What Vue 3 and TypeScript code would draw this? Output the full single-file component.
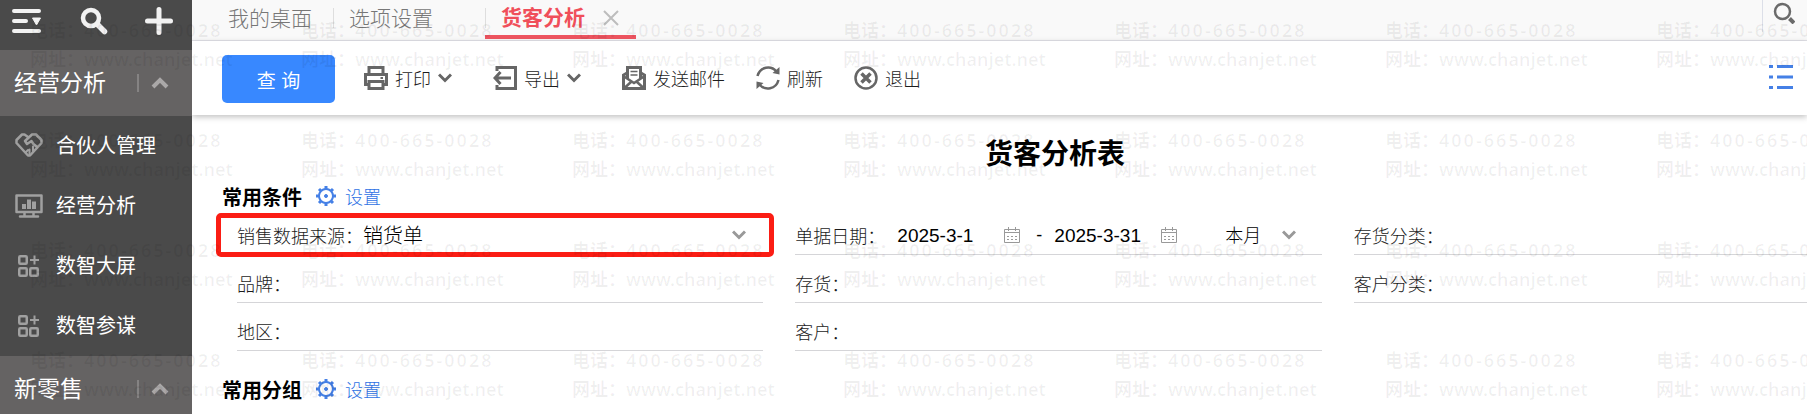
<script setup lang="ts">
import { ref } from 'vue'

interface MenuItem {
  label: string
  icon: 'partner' | 'chart' | 'grid'
}

const menuItems: MenuItem[] = [
  { label: '合伙人管理', icon: 'partner' },
  { label: '经营分析', icon: 'chart' },
  { label: '数智大屏', icon: 'grid' },
  { label: '数智参谋', icon: 'grid' },
]

const source = ref('销货单')
const startDate = ref('2025-3-1')
const endDate = ref('2025-3-31')
const period = ref('本月')
const brand = ref('')
const stock = ref('')
const region = ref('')
const customer = ref('')
const stockClass = ref('')
const customerClass = ref('')
</script>

<template>
  <div class="app">
    <aside class="sidebar">
      <div class="side-tools">
        <button type="button" aria-label="折叠菜单">
          <svg width="30" height="26" viewBox="0 0 30 26">
            <g stroke="#f2f2f2" stroke-width="4" stroke-linecap="round">
              <path d="M2 3H27M2 13H14M2 23H27" />
            </g>
            <path d="M20.500 10h8l-4 7z" fill="#f2f2f2" stroke="#f2f2f2" stroke-linejoin="round" />
          </svg>
        </button>
        <button type="button" aria-label="搜索菜单">
          <svg width="28" height="28" viewBox="0 0 28 28" fill="none" stroke="#f2f2f2" stroke-linecap="round">
            <circle cx="11" cy="11" r="8" stroke-width="4.500" />
            <path d="M18 18L24.500 24.500" stroke-width="5.500" />
          </svg>
        </button>
        <button type="button" aria-label="新增">
          <svg width="28" height="28" viewBox="0 0 28 28">
            <path d="M14 2.500V25.500M2.500 14H25.500" stroke="#f2f2f2" stroke-width="5" stroke-linecap="round" />
          </svg>
        </button>
      </div>

      <button type="button" class="group">
        <span class="group-name">经营分析</span>
        <span class="bar"></span>
        <svg width="18" height="12" viewBox="0 0 18 12" fill="none" stroke="#aaa8a8" stroke-width="4">
          <path d="M2 10L9 3L16 10" />
        </svg>
      </button>

      <nav>
        <a v-for="item in menuItems" :key="item.label" href="#" class="item">
          <svg v-if="item.icon === 'partner'" width="28" height="28" viewBox="0 0 28 28" fill="none" stroke="#a0a0a0" stroke-width="2.500" stroke-linejoin="round" stroke-linecap="round">
            <path d="M13 5L9.500 2.500H7L1.500 8V11L13 23.500H15L26.500 11V8L21 2.500H17L10 9L12 12L16.500 9L18.500 12L22 15" />
            <path d="M11 20L13 18M14.500 22.500V17.500M18 19V14.500" stroke-width="2" />
          </svg>
          <svg v-else-if="item.icon === 'chart'" width="28" height="24" viewBox="0 0 28 24">
            <path d="M1.500 1.500H26.500V18H1.500ZM9.500 18V22M18.500 18V22M5 22.500H23" fill="none" stroke="#a0a0a0" stroke-width="2.500" stroke-linejoin="round" stroke-linecap="round" />
            <path d="M9 15V10M14 15V5.500M19 15V7.500" stroke="#a0a0a0" stroke-width="4" />
          </svg>
          <svg v-else width="28" height="24" viewBox="0 0 28 24" fill="none" stroke="#a0a0a0" stroke-width="2.500">
            <rect x="4.250" y="2.250" width="7.500" height="7.500" rx="1" />
            <rect x="4.250" y="14.250" width="7.500" height="7.500" rx="1" />
            <rect x="15.250" y="14.250" width="7.500" height="7.500" rx="1" />
            <path d="M19.500 1.500V10.500M15 6H24" stroke-width="2" />
          </svg>
          <span>{{ item.label }}</span>
        </a>
      </nav>

      <button type="button" class="group">
        <span class="group-name">新零售</span>
        <span class="bar"></span>
        <svg width="18" height="12" viewBox="0 0 18 12" fill="none" stroke="#aaa8a8" stroke-width="4">
          <path d="M2 10L9 3L16 10" />
        </svg>
      </button>
    </aside>

    <main class="main">
      <header class="tabs">
        <a href="#" class="tab home">我的桌面</a>
        <a href="#" class="tab options">选项设置</a>
        <div class="tab active">
          <a href="#">货客分析</a>
          <button type="button" aria-label="关闭标签">
            <svg width="16" height="16" viewBox="0 0 16 16" stroke="#bdbdbd" stroke-width="2">
              <path d="M1 1L15 15M15 1L1 15" />
            </svg>
          </button>
        </div>
        <button type="button" class="tab-search" aria-label="搜索">
          <svg width="22" height="22" viewBox="0 0 22 22" fill="none" stroke="#6b6b6b">
            <circle cx="9.500" cy="9.500" r="7.500" stroke-width="2.500" />
            <path d="M16.500 16.500L21 21" stroke-width="4" />
          </svg>
        </button>
      </header>

      <div class="toolbar">
        <button type="button" class="query">查 询</button>
        <button type="button" class="tool print">
          <svg width="24" height="24" viewBox="0 0 24 24" fill="none" stroke="#666" stroke-width="3">
            <path d="M5 8V1.500H19V8M5 18.500H1.500V8.500H22.500V18.500H19" />
            <path d="M5 15.500H19V22.500H5Z" />
            <path d="M16.500 12H19" stroke-width="2" />
          </svg>
          <span>打印</span>
          <svg width="14" height="10" viewBox="0 0 14 10" fill="none" stroke="#666" stroke-width="3">
            <path d="M1 1.500L7 7.500L13 1.500" />
          </svg>
        </button>
        <button type="button" class="tool export">
          <svg width="24" height="24" viewBox="0 0 24 24" fill="none" stroke="#666" stroke-width="3">
            <path d="M4 5V1.500H22.500V22.500H4V19" />
            <path d="M18 12H2M7.500 6L2 12L7.500 18" />
          </svg>
          <span>导出</span>
          <svg width="14" height="10" viewBox="0 0 14 10" fill="none" stroke="#666" stroke-width="3">
            <path d="M1 1.500L7 7.500L13 1.500" />
          </svg>
        </button>
        <button type="button" class="tool mail">
          <svg width="24" height="24" viewBox="0 0 24 24" fill="none" stroke="#666" stroke-width="3">
            <path d="M5.500 13V1.500H18.500V13" />
            <path d="M5 7L1.500 9V22.500H22.500V9L19 7" />
            <path d="M2 10.500L12 17L22 10.500M2.500 22L9.500 15.500M21.500 22L14.500 15.500" stroke-width="2.500" />
            <path d="M8.500 5.500H15.500M8.500 9H15.500" stroke-width="1.500" />
          </svg>
          <span>发送邮件</span>
        </button>
        <button type="button" class="tool refresh">
          <svg width="24" height="24" viewBox="0 0 24 24" fill="none" stroke="#666" stroke-width="2.500">
            <path d="M1.500 10C4 0.500 15 -1 20.500 5.500M22.500 14C20 23.500 9 25 3.500 18.500" />
            <path d="M23.500 1V8.500L16.500 7ZM0.500 23V15.500L7.500 17Z" fill="#666" stroke="none" />
          </svg>
          <span>刷新</span>
        </button>
        <button type="button" class="tool exit">
          <svg width="24" height="24" viewBox="0 0 24 24" fill="none" stroke="#666">
            <circle cx="12" cy="12" r="10.500" stroke-width="2.500" />
            <path d="M7.500 7.500L16.500 16.500M16.500 7.500L7.500 16.500" stroke-width="3.500" />
          </svg>
          <span>退出</span>
        </button>
        <button type="button" class="list-toggle" aria-label="列表">
          <svg width="26" height="26" viewBox="0 0 26 26" stroke="#4580e6" stroke-width="3">
            <path d="M1 2.500H5M9 2.500H25M1 13H5M9 13H25M1 23.500H5M9 23.500H25" />
          </svg>
        </button>
      </div>

      <div class="report">
        <h1>货客分析表</h1>

        <div class="section">
          <h2>常用条件</h2>
          <a href="#">
            <svg width="22" height="22" viewBox="0 0 22 22" fill="none" stroke="#4580e6">
              <circle cx="11" cy="11" r="7" stroke-width="2" />
              <circle cx="11" cy="11" r="1.500" fill="#4580e6" />
              <path d="M11 1V4M11 18V21M1 11H4M18 11H21M4 4L6 6M16 16L18 18M4 18L6 16M16 6L18 4" stroke-width="3" />
            </svg>
            设置
          </a>
        </div>

        <form class="filters" @submit.prevent>
          <div class="field marked">
            <label for="source">销售数据来源：</label>
            <select id="source" v-model="source" class="big">
              <option>销货单</option>
            </select>
            <svg class="chev" width="14" height="10" viewBox="0 0 14 10" fill="none" stroke="#999" stroke-width="3">
              <path d="M1 1.500L7 7.500L13 1.500" />
            </svg>
          </div>
          <div class="field dates">
            <label for="start">单据日期：</label>
            <input id="start" v-model="startDate" type="text" class="date start" />
            <button type="button" aria-label="选择开始日期">
              <svg width="16" height="16" viewBox="0 0 16 16" fill="none" stroke="#999">
                <path d="M0.500 2.500H15.500V15.500H0.500ZM0.500 5.500H15.500M4.500 0V4M11.500 0V4" />
                <path d="M3 9.500H13M3 12.500H13" stroke-dasharray="2 2" />
              </svg>
            </button>
            <span class="dash">-</span>
            <input v-model="endDate" type="text" class="date end" aria-label="结束日期" />
            <button type="button" aria-label="选择结束日期">
              <svg width="16" height="16" viewBox="0 0 16 16" fill="none" stroke="#999">
                <path d="M0.500 2.500H15.500V15.500H0.500ZM0.500 5.500H15.500M4.500 0V4M11.500 0V4" />
                <path d="M3 9.500H13M3 12.500H13" stroke-dasharray="2 2" />
              </svg>
            </button>
            <select v-model="period" class="period" aria-label="日期区间">
              <option>本月</option>
            </select>
            <svg class="chev" width="14" height="10" viewBox="0 0 14 10" fill="none" stroke="#999" stroke-width="3">
              <path d="M1 1.500L7 7.500L13 1.500" />
            </svg>
          </div>
          <div class="field">
            <label for="stock-class">存货分类：</label>
            <input id="stock-class" v-model="stockClass" type="text" />
          </div>
          <div class="field">
            <label for="brand">品牌：</label>
            <input id="brand" v-model="brand" type="text" />
          </div>
          <div class="field">
            <label for="stock">存货：</label>
            <input id="stock" v-model="stock" type="text" />
          </div>
          <div class="field">
            <label for="customer-class">客户分类：</label>
            <input id="customer-class" v-model="customerClass" type="text" />
          </div>
          <div class="field">
            <label for="region">地区：</label>
            <input id="region" v-model="region" type="text" />
          </div>
          <div class="field">
            <label for="customer">客户：</label>
            <input id="customer" v-model="customer" type="text" />
          </div>
        </form>

        <div class="section">
          <h2>常用分组</h2>
          <a href="#">
            <svg width="22" height="22" viewBox="0 0 22 22" fill="none" stroke="#4580e6">
              <circle cx="11" cy="11" r="7" stroke-width="2" />
              <circle cx="11" cy="11" r="1.500" fill="#4580e6" />
              <path d="M11 1V4M11 18V21M1 11H4M18 11H21M4 4L6 6M16 16L18 18M4 18L6 16M16 6L18 4" stroke-width="3" />
            </svg>
            设置
          </a>
        </div>
      </div>
    </main>

    <div class="watermark" aria-hidden="true">
      <div v-for="n in 28" :key="n" class="mark">
        <div>电话：<span class="phone">400-665-0028</span></div>
        <div>网址：<span class="site">www.chanjet.net</span></div>
      </div>
    </div>
  </div>
</template>

<style>
body {
  margin: 0;
}
</style>

<style scoped>
.app {
  position: relative;
  display: flex;
  height: 100vh;
  overflow: hidden;
  background: #fff;
  color: #1c1c1c;
  font-family: "Liberation Sans", "Noto Sans CJK SC", sans-serif;
  font-size: 18px;
  font-weight: 300;
}
button,
input,
select {
  margin: 0;
  padding: 0;
  border: 0;
  background: none;
  color: inherit;
  font: inherit;
  appearance: none;
  outline: none;
}
a {
  color: inherit;
  text-decoration: none;
}
svg {
  display: block;
  flex: none;
}

.sidebar {
  flex: none;
  width: 192px;
  background: #4a4a4a;
  color: #fff;
}
.side-tools {
  display: flex;
  align-items: center;
  justify-content: space-between;
  box-sizing: border-box;
  height: 50px;
  padding: 0 19px 8px 12px;
}
.group {
  display: flex;
  align-items: center;
  box-sizing: border-box;
  width: 100%;
  height: 66px;
  padding: 0 23px 0 14px;
  background: #656363;
}
.group-name {
  flex: 1;
  padding-bottom: 4px;
  font-size: 23px;
  font-weight: 400;
  text-align: left;
}
.bar {
  width: 2px;
  height: 18px;
  margin-right: 12px;
  background: #858383;
}
.item {
  display: flex;
  align-items: center;
  gap: 13px;
  height: 60px;
  padding-left: 15px;
  font-size: 20px;
  font-weight: 400;
}
.item span {
  padding-bottom: 4px;
}

.main {
  flex: 1;
  min-width: 0;
  overflow: hidden;
}
.tabs {
  display: flex;
  height: 40px;
  padding-left: 22px;
  border-bottom: 1px solid #e2e2e8;
  background: #f9f9f9;
  color: #777;
  font-size: 21px;
  line-height: 38px;
}
.tab {
  position: relative;
  padding: 0 16px;
}
.home {
  padding: 0 21px 0 14px;
}
.options {
  padding-right: 52px;
}
.options::before,
.active::before {
  content: "";
  position: absolute;
  top: 8px;
  left: 0;
  width: 1px;
  height: 20px;
  background: #dedede;
}
.active {
  display: flex;
  align-items: center;
  gap: 18px;
  box-sizing: border-box;
  height: 39px;
  padding-right: 17px;
  border-bottom: 4px solid #ee5560;
  color: #f04f5a;
  font-weight: 700;
}
.tab-search {
  width: 45px;
  height: 32px;
  margin-left: auto;
  padding: 0 0 6px 10px;
  border-left: 1px solid #dcdfe8;
}
.toolbar {
  position: relative;
  display: flex;
  align-items: center;
  box-sizing: border-box;
  height: 74px;
  padding: 2px 13px 0 30px;
  background: #fff;
  box-shadow: 0 2px 6px rgba(0, 0, 0, 0.25);
}
.query {
  width: 113px;
  height: 48px;
  margin-right: 29px;
  border-radius: 5px;
  background: #3888ff;
  color: #fff;
  font-size: 19px;
  font-weight: 400;
}
.tool {
  display: flex;
  align-items: center;
  gap: 7px;
  padding-bottom: 2px;
}
.print,
.export {
  margin-right: 41px;
}
.mail,
.refresh {
  margin-right: 31px;
}
.list-toggle {
  margin-left: auto;
  padding-bottom: 4px;
}

.report {
  box-sizing: border-box;
  width: 107%;
  padding: 19px 32px 0 30px;
}
h1 {
  margin: 0;
  color: #000;
  font-size: 28px;
  font-weight: 700;
  line-height: 42px;
  text-align: center;
}
.section {
  display: flex;
  align-items: center;
  gap: 13px;
  height: 40px;
}
h2 {
  margin: 0;
  color: #000;
  font-size: 20px;
  font-weight: 700;
}
.section a {
  display: flex;
  align-items: center;
  gap: 8px;
  color: #2f72e4;
}
.filters {
  display: grid;
  grid-template-columns: repeat(3, 1fr);
  column-gap: 32px;
  margin-top: -9px;
  padding: 0 8px 18px 15px;
}
.field {
  position: relative;
  display: flex;
  align-items: center;
  box-sizing: border-box;
  min-width: 0;
  height: 48px;
  padding-top: 9px;
  border-bottom: 1px solid #d5d5d8;
}
.field label {
  flex: none;
}
.field input,
.field select {
  flex: 1;
  min-width: 0;
  padding-top: 2px;
  color: #000;
}
.field .big {
  font-size: 20px;
}
.marked::after {
  content: "";
  position: absolute;
  top: 6px;
  right: -11px;
  bottom: -3px;
  left: -21px;
  border: 5px solid #fb1d14;
  border-radius: 5px;
  pointer-events: none;
}
.marked .chev {
  margin-right: 17px;
}
.field .date {
  flex: none;
  width: 107px;
  font-size: 19px;
  font-weight: 400;
}
.field .start {
  margin-left: 12px;
}
.dash {
  width: 18px;
  margin-left: 16px;
  color: #000;
  font-weight: 400;
}
.field .period {
  flex: none;
  width: 57px;
  margin-left: 48px;
}
.watermark {
  position: absolute;
  inset: 0;
  display: grid;
  grid-template-columns: repeat(7, 271px);
  grid-auto-rows: 110px;
  align-content: start;
  padding: 15px 0 0 30px;
  overflow: hidden;
  color: rgba(0, 0, 0, 0.06);
  font-family: "Noto Sans CJK SC", sans-serif;
  font-weight: 700;
  line-height: 29px;
  white-space: nowrap;
  pointer-events: none;
}
.mark div {
  height: 29px;
}
.phone,
.site {
  font-family: "Noto Sans", sans-serif;
  font-weight: 600;
}
.phone {
  letter-spacing: 2px;
}
</style>
